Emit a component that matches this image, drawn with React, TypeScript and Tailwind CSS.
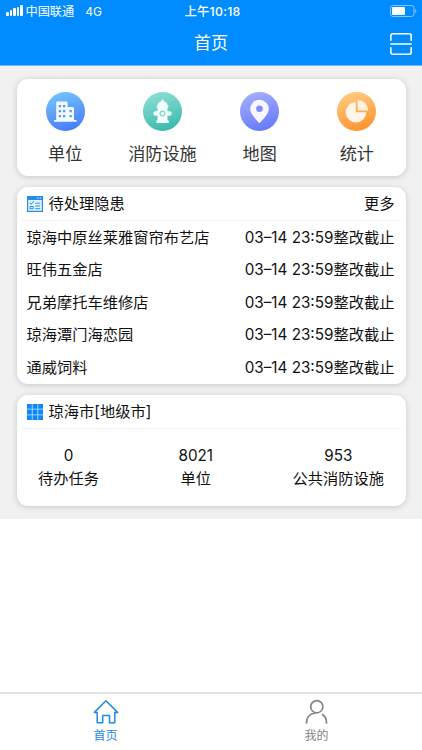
import React from "react";

interface MenuItem {
    label: string;
    icon: React.ReactNode;
}

interface Task {
    name: string;
    deadline: string;
}

interface Stat {
    value: number;
    label: string;
}

const tasks: Task[] = [
    { name: "琼海中原丝莱雅窗帘布艺店", deadline: "03–14 23:59" },
    { name: "旺伟五金店", deadline: "03–14 23:59" },
    { name: "兄弟摩托车维修店", deadline: "03–14 23:59" },
    { name: "琼海潭门海恋园", deadline: "03–14 23:59" },
    { name: "通威饲料", deadline: "03–14 23:59" },
];

const stats: Stat[] = [
    { value: 0, label: "待办任务" },
    { value: 8021, label: "单位" },
    { value: 953, label: "公共消防设施" },
];

const Disc: React.FC<{ id: string; from: string; to: string; children: React.ReactNode }> = ({ id, from, to, children }) => (
    <svg width="39" height="39" viewBox="0 0 39 39">
        <defs>
            <linearGradient id={id} x1="0.35" y1="0" x2="0.65" y2="1">
                <stop offset="0" stopColor={from} />
                <stop offset="1" stopColor={to} />
            </linearGradient>
        </defs>
        <circle cx="19.5" cy="19.5" r="19.5" fill={`url(#${id})`} />
        {children}
    </svg>
);

const menu: MenuItem[] = [
    {
        label: "单位",
        icon: (
            <Disc id="unit" from="#74c2fb" to="#447cfa">
                <path d="M10.2 28V10.8a1.4 1.4 0 0 1 1.4-1.4h8.6a1.4 1.4 0 0 1 1.4 1.4V15h5a1.4 1.4 0 0 1 1.4 1.4V28h2.6v1.8H8V28z" fill="#f3f9ff" />
                <path d="M12.8 13h2.3v2.3h-2.3zM17 13h2.3v2.3H17zM12.8 18h2.3v2.3h-2.3zM17 18h2.3v2.3H17zM12.8 23h2.3v2.3h-2.3zM17 23h2.3v2.3H17zM23.5 18h2.3v2.3h-2.3zM23.5 23h2.3v2.3h-2.3z" fill="#559afb" />
            </Disc>
        ),
    },
    {
        label: "消防设施",
        icon: (
            <Disc id="hydrant" from="#8bddd3" to="#39b9ac">
                <path d="M18.4 8.6a1.1 1.1 0 0 1 2.2 0v.6c2.3.5 3.9 2.1 4.1 4.3h.6v2H13.7v-2h.6c.2-2.2 1.8-3.8 4.1-4.3z" fill="#f3fffd" />
                <path d="M14.5 15h10v14h-10zM13.3 28.6h12.4V31H13.3zM11.5 19.2h16v4.6h-16zM10.3 20.3h18.4v2.4H10.3z" fill="#f3fffd" />
                <circle cx="19.5" cy="21.5" r="2.5" fill="none" stroke="#58c7bc" strokeWidth="1" />
            </Disc>
        ),
    },
    {
        label: "地图",
        icon: (
            <Disc id="map" from="#a3adf9" to="#6579fb">
                <path d="M19.5 31S10.2 22.8 10.2 17a9.3 9.3 0 0 1 18.6 0C28.8 22.8 19.5 31 19.5 31z" fill="#f6f7ff" />
                <circle cx="19.5" cy="16.8" r="3.3" fill="#7f8dfa" />
            </Disc>
        ),
    },
    {
        label: "统计",
        icon: (
            <Disc id="chart" from="#ffcb80" to="#ff922e">
                <path d="M18.7 10v10.3h10.6A10.3 10.3 0 1 1 18.7 10z" fill="#fff5e9" />
                <path d="M20.7 8a10.5 10.5 0 0 1 10.5 10.4H20.7z" fill="#fff0de" />
            </Disc>
        ),
    },
];

const StatusBar: React.FC = () => (
    <div className="flex h-[22px] items-center text-xs text-white">
        <div className="flex flex-1 items-center pl-[6px]">
            <div className="flex h-[11px] items-end gap-[1px]">
                <span className="h-1 w-[2.5px] rounded-[1px] bg-white" />
                <span className="h-[6px] w-[2.5px] rounded-[1px] bg-white" />
                <span className="h-2 w-[2.5px] rounded-[1px] bg-white" />
                <span className="h-[9px] w-[2.5px] rounded-[1px] bg-white" />
                <span className="h-[11px] w-[2.5px] rounded-[1px] bg-white" />
            </div>
            <span className="ml-[3px] pt-[2px] text-[12.2px]">中国联通</span>
            <span className="ml-[11px] pt-[2px] text-[12px]">4G</span>
        </div>
        <span className="pt-[2px] pl-[2px] text-[12.3px] font-medium tracking-[0.25px]">上午10:18</span>
        <div className="flex flex-1 justify-end pr-[5px]">
            <svg width="27" height="12" viewBox="0 0 27 12" fill="none">
                <rect x=".5" y=".5" width="23.5" height="11" rx="2.6" stroke="#fff" strokeOpacity=".5" />
                <rect x="2" y="2" width="13" height="8" rx="1" fill="#fff" />
                <path d="M25.2 4v4c1.6-.8 1.6-3.2 0-4z" fill="#fff" fillOpacity=".5" />
            </svg>
        </div>
    </div>
);

const Header: React.FC = () => (
    <header className="h-[66px] border-b border-[#71bbfb] bg-[#008cff]">
        <StatusBar />
        <div className="grid h-[43px] grid-cols-3 items-center text-white">
            <h1 className="col-start-2 text-center text-[17px]">首页</h1>
            <svg className="mr-[10px] justify-self-end" width="22" height="22" viewBox="0 0 22 22" fill="none" stroke="#fff" strokeWidth="1.6">
                <path d="M.8 7.8v-5a2 2 0 0 1 2-2h16.4a2 2 0 0 1 2 2v5M.8 14.2v5a2 2 0 0 0 2 2h16.4a2 2 0 0 0 2-2v-5M.3 11h21.4" />
            </svg>
        </div>
    </header>
);

const Card: React.FC<{ className: string; children: React.ReactNode }> = ({ className, children }) => (
    <section className={`rounded-[11px] bg-white shadow-[0_1px_6px_rgba(0,0,0,0.18)] ${className}`}>{children}</section>
);

const ListIcon: React.FC = () => (
    <svg width="16" height="16" viewBox="0 0 16 16" fill="none">
        <path d="M0 0h16v16H0z" fill="#1f8df5" />
        <path d="M1.2 4h13.6v10.8H1.2z" fill="#e9f5ff" />
        <path d="M10.3 2h1.2M12.8 2H14" stroke="#fff" />
        <path d="m2.8 6.8 1.4 1.5L7 5M8.2 7.2h5M8.2 10h5M8.2 12.7h5M3 10.5h3.2v2.3H3z" stroke="#1f8df5" strokeWidth="1" />
    </svg>
);

const GridIcon: React.FC = () => (
    <svg width="16" height="16" viewBox="0 0 16 16">
        <path d="M0 0h16v16H0z" fill="#cfe8ff" />
        <path d="M0 0h4.8v4.8H0zM5.6 0h4.8v4.8H5.6zM11.2 0H16v4.8h-4.8zM0 5.6h4.8v4.8H0zM5.6 5.6h4.8v4.8H5.6zM11.2 5.6H16v4.8h-4.8zM0 11.2h4.8V16H0zM5.6 11.2h4.8V16H5.6zM11.2 11.2H16V16h-4.8z" fill="#0b87fb" />
    </svg>
);

const TabBar: React.FC = () => (
    <nav className="grid h-[58px] grid-cols-2 border-t-2 border-[#e2e2e2] bg-white text-xs">
        <div className="flex flex-col items-center pt-[5px] text-[#1f88ed]">
            <svg width="26" height="26" viewBox="0 0 26 26" fill="none" stroke="currentColor" strokeWidth="1.5" strokeLinejoin="round" strokeLinecap="round">
                <path d="M4.2 13.4H1.4L13 1.8l11.6 11.6h-2.8v10.4h-5.3v-7.2H9.7v7.2H4.2z" />
            </svg>
            <span className="leading-[22px]">首页</span>
        </div>
        <div className="flex flex-col items-center pt-[5px] text-[#858585]">
            <svg width="26" height="26" viewBox="0 0 26 26" fill="none" stroke="currentColor" strokeWidth="1.7" strokeLinecap="round">
                <circle cx="12.8" cy="7.7" r="6.1" />
                <path d="M11.1 14C5.8 14.6 2.5 18.5 2.5 24M18.6 15.5c2.5 1.8 3.9 4.8 3.9 8.5" />
            </svg>
            <span className="leading-[22px]">我的</span>
        </div>
    </nav>
);

const App: React.FC = () => (
    <div className="flex h-[750px] w-[422px] flex-col overflow-hidden bg-white font-[Inter,'Noto_Sans_CJK_SC',sans-serif] text-[15.25px] text-[#111]">
        <Header />
        <main className="flex h-[453px] flex-col gap-[11px] bg-[#f1f1f1] pt-[13px] pr-[16.5px] pl-[16.6px]">
            <Card className="grid h-[97px] grid-cols-4">
                {menu.map((item) => (
                    <div key={item.label} className="flex flex-col items-center pt-[13px]">
                        {item.icon}
                        <span className="mt-[11px] text-[17.1px] leading-6 text-[#333]">{item.label}</span>
                    </div>
                ))}
            </Card>
            <Card className="h-[197px]">
                <div className="mx-[5px] flex h-[34px] items-center border-b border-[#efefef] pr-[6px] pl-[5px]">
                    <ListIcon />
                    <h2 className="ml-[6px] flex-1 pt-[2px]">待处理隐患</h2>
                    <span className="pt-[2px]">更多</span>
                </div>
                {tasks.map((task) => (
                    <div key={task.name} className="flex h-[32.6px] items-center justify-between pt-[1.5px] pr-[11px] pl-[10px]">
                        <span>{task.name}</span>
                        <span>
                            {task.deadline}整改截止
                        </span>
                    </div>
                ))}
            </Card>
            <Card className="h-[111px]">
                <div className="mx-[5px] flex h-[34px] items-center border-b border-[#efefef] px-[5px]">
                    <GridIcon />
                    <h2 className="ml-[6px] pt-px">琼海市[地级市]</h2>
                </div>
                <div className="flex justify-between px-[21.5px] pt-4">
                    {stats.map((stat) => (
                        <div key={stat.label} className="flex flex-col items-center leading-[22.5px]">
                            <span>{stat.value}</span>
                            <span>{stat.label}</span>
                        </div>
                    ))}
                </div>
            </Card>
        </main>
        <div className="flex-1" />
        <TabBar />
    </div>
);

export default App;
